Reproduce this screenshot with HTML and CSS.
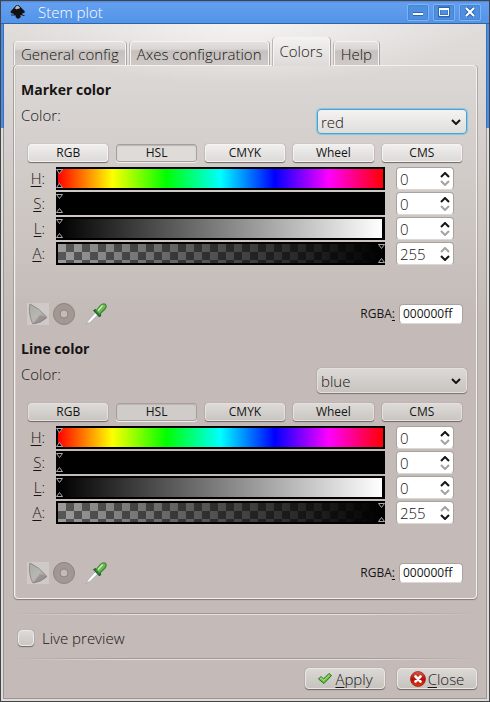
FILE: index.html
```html
<!DOCTYPE html>
<html lang="en">
<head>
<meta charset="utf-8">
<title>Stem plot</title>
<link rel="stylesheet" href="styles.css">
</head>
<body>
<svg class="defs" aria-hidden="true">
  <defs>
    <linearGradient id="coneFill" x1="0" y1="0" x2="1" y2="1">
      <stop offset="0" stop-color="#a9aaa4"/><stop offset=".5" stop-color="#b8b8b2"/><stop offset=".75" stop-color="#ae9fa3"/><stop offset="1" stop-color="#8f8a96"/>
    </linearGradient>
    <linearGradient id="greenFill" x1="0" y1="0" x2="1" y2="1">
      <stop offset="0" stop-color="#a4e07c"/><stop offset="1" stop-color="#3c9a35"/>
    </linearGradient>
    <linearGradient id="redFill" x1="0" y1="0" x2="0" y2="1">
      <stop offset="0" stop-color="#d8604e"/><stop offset=".5" stop-color="#b80f05"/><stop offset="1" stop-color="#e03a10"/>
    </linearGradient>
    <symbol id="chevron" viewBox="0 0 10 6"><path d="M1 1l4 4 4-4" fill="none" stroke="currentColor" stroke-width="2"/></symbol>
    <symbol id="cone" viewBox="0 0 22 22">
      <rect width="22" height="22" fill="#cfcac7"/>
      <path d="M3 1C1.500 7 3 16 6 21Q14 20 20 14.500Q12 5 3 1z" fill="url(#coneFill)" stroke="#918b8b"/>
      <path d="M6 21Q14 20 20 14.500L13 12z" fill="#817983" opacity=".45"/>
    </symbol>
    <symbol id="ring" viewBox="0 0 22 22">
      <circle cx="11" cy="11" r="7.300" fill="none" stroke="#a39793" stroke-width="6.800"/>
      <circle cx="11" cy="11" r="10.500" fill="none" stroke="#918482"/>
      <circle cx="11" cy="11" r="4" fill="none" stroke="#918482"/>
    </symbol>
    <symbol id="dropper" viewBox="0 0 22 22">
      <path d="M11 9L3 18L1 21.500L5 19.500L13.500 11.500z" fill="#eef1f3" stroke="#9da5ab" stroke-width=".7"/>
      <path d="M11 11L4 18.500" stroke="#fff" stroke-width="1.500"/>
      <path d="M8.500 7.500L10.500 6.500L16 12L14.500 14z" fill="#286d2d" stroke="#205a25"/>
      <path d="M11 8L15.500 2.500Q18.500 0 20.500 1.500Q22 3.500 20 6L14.500 11.500z" fill="url(#greenFill)" stroke="#3c8738" stroke-width="1.200"/>
      <path d="M13 7.500L17.500 2.500" stroke="#c6efaa" stroke-width="1.500"/>
    </symbol>
  </defs>
</svg>
<main class="window">
  <header class="titlebar">
    <svg class="app-icon" viewBox="0 0 16 16" aria-hidden="true">
      <path d="M7.500 1Q8.500 1 9.500 2L14.500 7Q15.500 8.500 14 9L12 9.500L13 11L10 11.500L11 13L8 15L5.500 13L6 11.500L3 11.500L4 10L1 9Q0 8 1 7L5.500 2Q6.500 1 7.500 1z" fill="#111"/>
      <path d="M7.500 1.500L10 3.500L9 5L8 4.500L6.500 5.500L5.500 4.500L4.500 5L6 2.500z" fill="#b9bec6"/>
      <path d="M1 11h2M12.500 11.500h2" stroke="#222"/>
    </svg>
    <h1 class="title">Stem plot</h1>
    <button class="win-btn" aria-label="Minimize"><svg viewBox="0 0 12 12"><path d="M1 8h10" stroke="#2f66b0" stroke-width="4"/><path d="M1 8h10" stroke="#fff" stroke-width="2"/></svg></button>
    <button class="win-btn" aria-label="Maximize"><svg viewBox="0 0 12 12"><rect x="1" y="2" width="10" height="8" fill="none" stroke="#2f66b0" stroke-width="3"/><path d="M1.500 2v7.500h9V2" fill="none" stroke="#fff"/><path d="M1 3h10" stroke="#fff" stroke-width="2"/></svg></button>
    <button class="win-btn" aria-label="Close window"><svg viewBox="0 0 12 12"><path d="M2 2l8 8M10 2l-8 8" stroke="#2f66b0" stroke-width="4"/><path d="M2 2l8 8M10 2l-8 8" stroke="#fff" stroke-width="2"/></svg></button>
  </header>
  <div class="frame">
    <div class="client">
      <nav class="tabs" role="tablist">
        <button class="tab" role="tab">General config</button>
        <button class="tab" role="tab">Axes configuration</button>
        <button class="tab tab-active" role="tab" aria-selected="true">Colors</button>
        <button class="tab" role="tab">Help</button>
      </nav>
      <div class="panel">
        <section class="section">
          <h2 class="heading">Marker color</h2>
          <div class="color-row">
            <label for="m-color">Color:</label>
            <span class="combo combo-focus"><select id="m-color"><option>red</option></select><svg class="arrow"><use href="#chevron"/></svg></span>
          </div>
          <div class="modes">
            <button class="mode">RGB</button><button class="mode mode-on">HSL</button><button class="mode">CMYK</button><button class="mode">Wheel</button><button class="mode">CMS</button>
          </div>
          <div class="channels">
            <label for="m-h"><u>H</u>:</label><input class="slider hue" type="range" min="0" max="255" value="0" aria-label="Hue"><span class="spin"><input id="m-h" type="text" value="0"><svg class="up"><use href="#chevron"/></svg><svg class="down off"><use href="#chevron"/></svg></span>
            <label for="m-s"><u>S</u>:</label><input class="slider sat" type="range" min="0" max="255" value="0" aria-label="Saturation"><span class="spin"><input id="m-s" type="text" value="0"><svg class="up"><use href="#chevron"/></svg><svg class="down off"><use href="#chevron"/></svg></span>
            <label for="m-l"><u>L</u>:</label><input class="slider light" type="range" min="0" max="255" value="0" aria-label="Lightness"><span class="spin"><input id="m-l" type="text" value="0"><svg class="up"><use href="#chevron"/></svg><svg class="down off"><use href="#chevron"/></svg></span>
            <label for="m-a"><u>A</u>:</label><input class="slider alpha" type="range" min="0" max="255" value="255" aria-label="Alpha"><span class="spin"><input id="m-a" type="text" value="255"><svg class="up off"><use href="#chevron"/></svg><svg class="down"><use href="#chevron"/></svg></span>
          </div>
          <div class="tools">
            <svg class="tool"><use href="#cone"/></svg><svg class="tool"><use href="#ring"/></svg>
            <button class="pick" aria-label="Pick color"><svg class="tool"><use href="#dropper"/></svg></button>
            <label class="rgba" for="m-rgba">RGBA<u>:</u></label><input class="hex" id="m-rgba" type="text" value="000000ff">
          </div>
        </section>
        <section class="section">
          <h2 class="heading">Line color</h2>
          <div class="color-row">
            <label for="l-color">Color:</label>
            <span class="combo combo-low"><select id="l-color"><option>blue</option></select><svg class="arrow"><use href="#chevron"/></svg></span>
          </div>
          <div class="modes modes-low">
            <button class="mode">RGB</button><button class="mode mode-on">HSL</button><button class="mode">CMYK</button><button class="mode">Wheel</button><button class="mode">CMS</button>
          </div>
          <div class="channels">
            <label for="l-h"><u>H</u>:</label><input class="slider hue" type="range" min="0" max="255" value="0" aria-label="Hue"><span class="spin"><input id="l-h" type="text" value="0"><svg class="up"><use href="#chevron"/></svg><svg class="down off"><use href="#chevron"/></svg></span>
            <label for="l-s"><u>S</u>:</label><input class="slider sat" type="range" min="0" max="255" value="0" aria-label="Saturation"><span class="spin"><input id="l-s" type="text" value="0"><svg class="up"><use href="#chevron"/></svg><svg class="down off"><use href="#chevron"/></svg></span>
            <label for="l-l"><u>L</u>:</label><input class="slider light" type="range" min="0" max="255" value="0" aria-label="Lightness"><span class="spin"><input id="l-l" type="text" value="0"><svg class="up"><use href="#chevron"/></svg><svg class="down off"><use href="#chevron"/></svg></span>
            <label for="l-a"><u>A</u>:</label><input class="slider alpha" type="range" min="0" max="255" value="255" aria-label="Alpha"><span class="spin"><input id="l-a" type="text" value="255"><svg class="up off"><use href="#chevron"/></svg><svg class="down"><use href="#chevron"/></svg></span>
          </div>
          <div class="tools">
            <svg class="tool"><use href="#cone"/></svg><svg class="tool"><use href="#ring"/></svg>
            <button class="pick" aria-label="Pick color"><svg class="tool"><use href="#dropper"/></svg></button>
            <label class="rgba" for="l-rgba">RGBA<u>:</u></label><input class="hex" id="l-rgba" type="text" value="000000ff">
          </div>
        </section>
      </div>
      <div class="rule"></div>
      <label class="preview"><input type="checkbox">Live preview</label>
      <div class="rule"></div>
      <footer class="actions">
        <button class="action"><svg viewBox="0 0 16 16"><path d="M1.500 8L4 5.500L6.500 8L12 2.500L14.500 4.500L7 12.500z" fill="#6cc644" stroke="#256f20"/><path d="M3 7.500L4.500 7L6.500 9.500L12.500 4" fill="none" stroke="#a7e388"/></svg><span><u>A</u>pply</span></button>
        <button class="action"><svg viewBox="0 0 16 16"><circle cx="8" cy="8" r="7.500" fill="url(#redFill)" stroke="#8f1a10" stroke-width=".7"/><path d="M5.500 5.500l5 5M10.500 5.500l-5 5" stroke="#fff" stroke-width="2.600" stroke-linecap="round"/></svg><span><u>C</u>lose</span></button>
      </footer>
    </div>
  </div>
</main>
</body>
</html>
```

FILE: styles.css
```css
* { box-sizing: border-box; }
body {
  margin: 0;
  font: 300 15px/20px "Open Sans", "Noto Sans", sans-serif;
  color: #161514;
}
button, input, select { font: inherit; color: inherit; margin: 0; padding: 0; border: 0; outline: 0; }
svg { display: block; flex: none; }
u { text-underline-offset: 2px; text-decoration-thickness: 1px; }
.defs { position: absolute; width: 0; height: 0; }

.window {
  min-height: 100vh;
  display: flex;
  flex-direction: column;
  border: 1px solid #454345;
  background: linear-gradient(#4a8ee4 127px, #dcdcda 127px);
}
.titlebar {
  height: 23px;
  display: flex;
  align-items: center;
  gap: 4px;
  padding: 0 8px 0 9px;
  border-bottom: 1px solid #35639f;
  background: linear-gradient(#4987d9, #639ff0 2px, #5294e8);
  color: #fff;
}
.app-icon { width: 16px; height: 16px; }
.title { flex: 1; margin: 0 0 0 8px; font: inherit; }
.win-btn {
  width: 22px;
  height: 17px;
  display: grid;
  place-items: center;
  border: 1px solid #80b3f5;
  border-radius: 2px;
  background: #4f8fdf;
  box-shadow: inset 0 0 0 1px #4784d2;
}
.win-btn svg { width: 12px; height: 12px; }

.frame {
  flex: 1;
  display: flex;
  margin: 0 2px 2px;
  padding: 0 1px 1px;
  background: linear-gradient(#3a73bd 104px, #9c9693 104px);
}
.client {
  flex: 1;
  min-width: 0;
  display: flex;
  flex-direction: column;
  padding: 13px 9px 9px 10px;
  background:
    radial-gradient(ellipse 230px 60px at 50% 0, #f4f3f2, transparent),
    linear-gradient(#e0dddb, #c4bcb8 280px, #c4bab8 300px);
}

.tabs { display: flex; align-items: flex-end; gap: 4px; height: 29px; position: relative; margin-bottom: -1px; }
.tab {
  height: 24px;
  margin-bottom: 1px;
  padding: 0 6px;
  border: 1px solid #f5f4f3;
  border-bottom: 0;
  border-radius: 4px 4px 0 0;
  background: linear-gradient(#e3e0de, #d9d6d4 7px, #c6c1be 9px, #cfcac7);
  box-shadow: 1px 0 #aaa5a2, -1px 0 #bcb7b4;
}
.tab-active { height: 29px; margin-bottom: 0; padding-bottom: 3px; background: linear-gradient(#f3f2f1, #dddad8); }

.panel {
  padding: 14px 9px 14px 6px;
  border: 1px solid #f3f1f0;
  border-radius: 4px;
  box-shadow: 0 1px 1px #817b78, inset 1px 0 #d0cac7, 1px 0 #b5aeab, -1px 0 #aaa4a1;
}
.section + .section { margin-top: 14px; }
.heading { margin: 0; font-size: 14px; line-height: 20px; font-weight: 700; }
.color-row { display: flex; justify-content: space-between; align-items: flex-start; margin-top: 5px; }
.combo { position: relative; width: 150px; margin-top: 4px; }
.combo select {
  display: block;
  appearance: none;
  width: 100%;
  height: 25px;
  padding: 0 3px;
  border: 1px solid #f0eeed;
  border-radius: 4px;
  background: linear-gradient(#efeeed, #dbd8d5);
  box-shadow: 0 1px 1px #77716e, 0 0 1px #8a8481;
}
.combo-focus select { border-color: #43a5d5; box-shadow: 0 0 1px 1px #8cc3dd; background: linear-gradient(#f4f3f2, #e0dedb); }
.combo-low select { background: linear-gradient(#dcd9d6, #c8c4c0); border-color: #e3e0de; }
.arrow { position: absolute; right: 6px; top: 10px; width: 10px; height: 6px; }

.modes { display: grid; grid-template-columns: repeat(5, 1fr); gap: 8px; margin: 10px 5px 0 7px; }
.mode {
  height: 18px;
  font-size: 12px;
  font-weight: 400;
  line-height: 16px;
  border: 1px solid #f5f4f3;
  border-radius: 3px;
  background: linear-gradient(#f0efee, #dddad8);
  box-shadow: 0 1px 1px #6e6866, 0 0 1px #8a8481;
}
.mode-on, .modes-low .mode-on { border-color: #a5a09d; background: #dedbd9; box-shadow: 0 1px #efedec, inset 0 1px 1px #bab5b2; }
.modes-low .mode:not(.mode-on) { background: linear-gradient(#dddad7, #cac6c2); border-color: #e3e0de; }
.modes-low .mode-on { background: #d0ccc9; }

.channels { display: grid; grid-template-columns: 24px 1fr 58px; column-gap: 11px; row-gap: 2px; margin: 5px 13px 0 0; }
.channels label { text-align: right; line-height: 23px; }
.slider {
  appearance: none;
  display: block;
  width: 100%;
  height: 23px;
  background: #000;
}
.hue { background: linear-gradient(90deg, #f00, #ff0 16.67%, #0f0 33.33%, #0ff 50%, #00f 66.67%, #f0f 83.33%, #f00) 2px 2px / calc(100% - 4px) 19px no-repeat #000; }
.light { background: linear-gradient(90deg, #000, #fff) 2px 2px / calc(100% - 5px) 19px no-repeat #000; }
.alpha {
  background:
    linear-gradient(90deg, transparent, #000) 2px 2px / calc(100% - 4px) 19px no-repeat,
    linear-gradient(#000, #000) 0 0 / 100% 2px no-repeat,
    linear-gradient(#000, #000) 0 100% / 100% 2px no-repeat,
    linear-gradient(#000, #000) 0 0 / 2px 100% no-repeat,
    linear-gradient(#000, #000) 100% 0 / 2px 100% no-repeat,
    repeating-conic-gradient(#575757 0 25%, #9c9c9c 0 50%) 2px 2px / 16px 16px;
}
.slider::-webkit-slider-thumb {
  appearance: none;
  width: 7px;
  height: 19px;
  background: url("data:image/svg+xml,%3Csvg xmlns='http://www.w3.org/2000/svg' width='7' height='19'%3E%3Cpath d='M.5.5h6l-3 4zM.5 18.500h6l-3-4z' fill='%23000' stroke='%23aaa'/%3E%3C/svg%3E");
}
.spin { position: relative; }
.spin input, .hex {
  display: block;
  width: 100%;
  height: 23px;
  padding: 0 3px;
  border: 1px solid #a9a3a0;
  border-bottom-color: #dcd8d6;
  border-radius: 4px;
  background: #fff;
}
.spin svg { position: absolute; right: 4px; width: 10px; height: 6px; }
.up { top: 5px; transform: scaleY(-1); }
.down { top: 13px; }
.off { color: #a5a3a2; }

.tools { display: flex; align-items: center; gap: 4px; margin: 38px 4px 0 6px; font-size: 12px; font-weight: 400; }
.tool { width: 22px; height: 22px; }
.pick { margin-left: 6px; background: none; }
.rgba { margin-left: auto; }
.tools .hex { width: 64px; height: 20px; }

.rule {
  height: 2px;
  margin-top: 14px;
  background: linear-gradient(#9f9895 50%, #e4e0de 50%);
  mask-image: linear-gradient(90deg, transparent, #000 25%, #000 75%, transparent);
}
.preview { display: flex; align-items: center; gap: 8px; margin: 13px 4px 0; }
.preview input {
  appearance: none;
  width: 16px;
  height: 16px;
  border: 1px solid #edebe9;
  border-radius: 4px;
  background: linear-gradient(#dcd9d6, #cbc7c3);
  box-shadow: 0 1px 1px #6e6866, 0 0 1px #8a8481;
}
.preview + .rule { margin-top: 10px; }
.actions { display: flex; justify-content: flex-end; gap: 12px; margin-top: 8px; }
.action {
  width: 80px;
  height: 21px;
  display: flex;
  align-items: center;
  justify-content: center;
  gap: 2px;
  border: 1px solid #e9e6e4;
  border-radius: 4px;
  background: linear-gradient(#dbd8d5, #c7c3bf);
  box-shadow: 0 1px 1px #6e6866, 0 0 1px #8a8481;
}
.action svg { width: 16px; height: 16px; }
```
